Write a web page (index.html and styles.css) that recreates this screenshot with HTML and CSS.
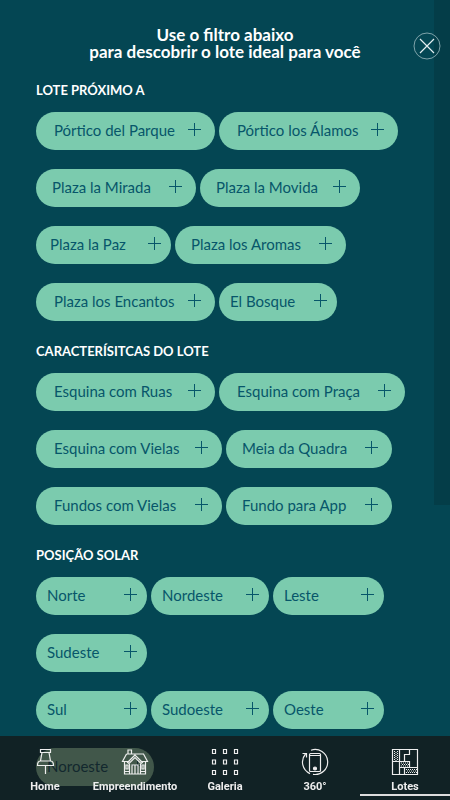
FILE: index.html
```html
<!DOCTYPE html>
<html lang="pt-BR">
<head>
  <meta charset="UTF-8">
  <meta name="viewport" content="width=device-width, initial-scale=1.0">
  <title>Lotes</title>
  <link rel="stylesheet" href="styles.css">
</head>
<body>
  <div class="side-bar"></div>

  <button type="button" class="close" aria-label="Fechar">
    <svg viewBox="0 0 28 28" width="28" height="28" fill="none">
      <circle cx="14" cy="14" r="13" stroke="#7fa3aa"/>
      <path d="M7 7l14 14M21 7L7 21" stroke="#e4eef0" stroke-width="1.2"/>
    </svg>
  </button>

  <main class="filter">
    <h1>Use o filtro abaixo<br>para descobrir o lote ideal para você</h1>

    <section>
      <h2>LOTE PRÓXIMO A</h2>
      <div class="pills">
        <button type="button" class="pill xl">Pórtico del Parque</button>
        <button type="button" class="pill xl">Pórtico los Álamos</button>
        <button type="button" class="pill lg">Plaza la Mirada</button>
        <button type="button" class="pill lg">Plaza la Movida</button>
        <button type="button" class="pill md">Plaza la Paz</button>
        <button type="button" class="pill lg wide">Plaza los Aromas</button>
        <button type="button" class="pill xl">Plaza los Encantos</button>
        <button type="button" class="pill sm">El Bosque</button>
      </div>
    </section>

    <section>
      <h2>CARACTERÍSITCAS DO LOTE</h2>
      <div class="pills">
        <button type="button" class="pill xl">Esquina com Ruas</button>
        <button type="button" class="pill xl wide">Esquina com Praça</button>
        <button type="button" class="pill xl wide">Esquina com Vielas</button>
        <button type="button" class="pill lg mid">Meia da Quadra</button>
        <button type="button" class="pill xl wide">Fundos com Vielas</button>
        <button type="button" class="pill lg mid">Fundo para App</button>
      </div>
    </section>

    <section>
      <h2>POSIÇÃO SOLAR</h2>
      <div class="pills">
        <button type="button" class="pill">Norte</button>
        <button type="button" class="pill sm">Nordeste</button>
        <button type="button" class="pill">Leste</button>
        <button type="button" class="pill">Sudeste</button>
      </div>
      <div class="pills">
        <button type="button" class="pill">Sul</button>
        <button type="button" class="pill sm">Sudoeste</button>
        <button type="button" class="pill">Oeste</button>
        <button type="button" class="pill sm">Noroeste</button>
      </div>
    </section>
  </main>

  <nav class="menu">
    <a href="#home">
      <svg viewBox="0 0 28 28" width="28" height="28">
        <path d="M9.500 1.500h10v3h-10zM11 4.500h7l1.500 8.500h-10zM6.500 17.500c0-3 1-4.500 3-4.500h10c2 0 3 1.500 3 4.500zM14.500 17.500V26"/>
      </svg>
      <span>Home</span>
    </a>
    <a href="#empreendimento">
      <svg viewBox="0 0 28 28" width="28" height="28">
        <path d="M7 5.500V2h3.500v3.500M6.500 2h4.500M5.500 6h17l4 7.500h-7M8.500 13.500h-7l4-7.500M14 7L6.500 14.500l1.500 1L14 9.500l6 6 1.500-1zM3.500 14v12h21V14M8.500 16v10M19.500 16v10M11 26v-9h6v9M14 17v9M5 17h2v4H5zM21 17h2v4h-2zM3.500 23.500h5M19.500 23.500h5"/>
      </svg>
      <span>Empreendimento</span>
    </a>
    <a href="#galeria">
      <svg viewBox="0 0 28 28" width="28" height="28">
        <path d="M1.500 1.500h3v4h-3zM12.500 1.500h3v4h-3zM23.500 1.500h3v4h-3zM1.500 12h3v4h-3zM12.500 12h3v4h-3zM23.500 12h3v4h-3zM1.500 22.500h3v4h-3zM12.500 22.500h3v4h-3zM23.500 22.500h3v4h-3z"/>
      </svg>
      <span>Galeria</span>
    </a>
    <a href="#360">
      <svg viewBox="0 0 28 28" width="28" height="28">
        <path d="M9 25.600A12.500 12.500 0 0 1 4.500 6M1.500 5.500h4v4M10 2.200A12.500 12.500 0 1 1 12 26.300M9.500 5.500h9q1 0 1 1v16q0 1-1 1h-9q-1 0-1-1v-16q0-1 1-1zM9 7.500h10"/>
        <circle class="dot" cx="14" cy="20.500" r="1.500"/>
      </svg>
      <span>360°</span>
    </a>
    <a href="#lotes" class="active">
      <svg viewBox="0 0 28 28" width="28" height="28">
        <path d="M1.500 1.500h25v25h-25zM8.500 1.500v25M1.500 13.500h17v6M18.500 1.500v5h-5v7M8.500 19.500h18M13.500 19.500v7"/>
        <path class="dots" d="M3.500 3v10M5 4v9M6.500 3v10M10 15h8M11 16.500h7M10 18h8M15 21.500h11M16 23h10M15 24.500h11"/>
      </svg>
      <span>Lotes</span>
    </a>
  </nav>
</body>
</html>
```

FILE: styles.css
```css
* {
  box-sizing: border-box;
}
body {
  margin: 0;
  min-height: 100vh;
  background: #044653;
  color: #fff;
  font-family: Lato, "Open Sans", sans-serif;
}
.side-bar {
  position: fixed;
  top: 0; right: 0;
  width: 16px; height: 505px;
  background: #043d48;
}
.close {
  position: absolute;
  top: 32px; right: 9px;
  width: 28px; height: 28px;
  padding: 0;
  background: none;
  border: none;
  cursor: pointer;
}
.close svg {
  display: block;
}
.filter {
  padding: 26px 36px 0;
}
h1 {
  margin: 0 0 21px;
  font-size: 17px;
  line-height: 17px;
  font-weight: bold;
  text-align: center;
}
h2 {
  margin: 0 0 13px;
  font-size: 13px;
  line-height: 18px;
  font-weight: bold;
}
section {
  margin-bottom: 21px;
}
.pills {
  display: flex;
  flex-wrap: wrap;
  gap: 19px 4px;
}
.pills + .pills {
  margin-top: 19px;
}

/* filter buttons */
.pill {
  display: flex;
  align-items: center;
  justify-content: space-between;
  width: 111px; height: 38px;
  padding: 0 10px 3px 11px;
  background: #7bcbae;
  color: #07566a;
  border: none;
  border-radius: 19px;
  font-family: inherit;
  font-size: 15px;
  white-space: nowrap;
  cursor: pointer;
}
.pill::after {
  content: "";
  width: 13px; height: 13px;
  background:
    linear-gradient(#07566a, #07566a) center / 13px 1px no-repeat,
    linear-gradient(#07566a, #07566a) center / 1px 13px no-repeat;
}
.pill.sm {
  width: 118px;
}
.pill.md {
  width: 135px;
  padding-left: 14px;
}
.pill.lg {
  width: 160px;
  padding-left: 16px;
  padding-right: 14px;
}
.pill.lg.mid {
  width: 166px;
}
.pill.lg.wide {
  width: 171px;
}
.pill.xl {
  width: 179px;
  padding-left: 18px;
  padding-right: 14px;
}
.pill.xl.wide {
  width: 186px;
}

/* bottom menu */
.menu {
  position: fixed;
  left: 0; right: 0; bottom: 0;
  display: flex;
  height: 64px;
  background: rgba(26,10,6,0.6);
}
.menu a {
  flex: 1 1 0;
  min-width: 0;
  display: flex;
  flex-direction: column;
  align-items: center;
  gap: 4px;
  padding-top: 12px;
  border-bottom: 2px solid transparent;
  color: #eee;
  font-family: Roboto, sans-serif;
  font-size: 11px;
  line-height: 14px;
  font-weight: bold;
  text-decoration: none;
}
.menu svg {
  fill: none;
  stroke: #eee;
  stroke-width: 1.2;
}
.menu .dot {
  fill: #eee;
}
.menu .dots {
  stroke-width: 1;
  stroke-dasharray: 1 1;
}
.menu .active {
  margin-bottom: 4px;
  border-bottom-color: #ddd;
}
```
